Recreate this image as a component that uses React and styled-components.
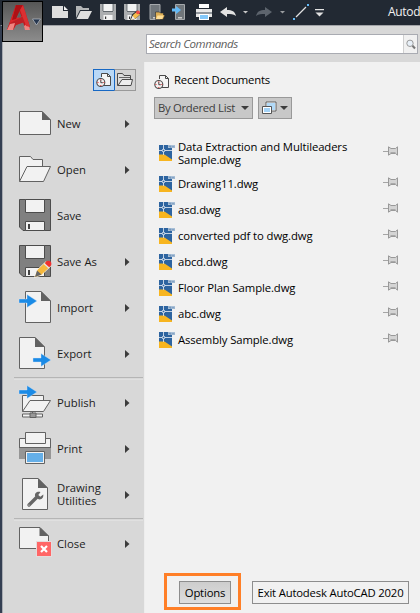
import React from "react";
import styled, { createGlobalStyle } from "styled-components";

const Global = createGlobalStyle`
  * { box-sizing: border-box; }
  body { margin: 0; overflow: hidden; background: #d8d8d8; }
  svg { display: block; flex: none; }
`;

const Window = styled.div`
  position: relative;
  width: 420px;
  height: 613px;
  overflow: hidden;
  display: flex;
  flex-direction: column;
  background: #d8d8d8;
  color: #111;
  font: 11.3px/13px "Open Sans", "Noto Sans", sans-serif;
`;

const TitleBar = styled.header`
  height: 25px;
  flex: none;
  display: flex;
  align-items: center;
  padding-left: 48px;
  background: #222933;
`;

const Slot = styled.div`
  width: ${(p) => p.$w || 24}px;
  height: 25px;
  flex: none;
  display: flex;
  justify-content: center;
  align-items: center;
`;

const Title = styled.span`
  margin-left: 64px;
  margin-top: -3px;
  color: #f2f2f2;
  font-size: 12px;
  letter-spacing: -0.3px;
  white-space: nowrap;
`;

const Body = styled.div`
  flex: 1;
  display: flex;
  flex-direction: column;
  border-top: 1px solid #a2a4a8;
  border-left: 2px solid #343f52;
`;

const Frame = styled.div`
  flex: 1;
  display: flex;
  flex-direction: column;
  border-left: 1px solid #a9acb2;
`;

const LogoButton = styled.button`
  position: absolute;
  left: 2px;
  top: 1px;
  width: 41px;
  height: 41px;
  padding: 0;
  border: 1px solid #000;
  background: linear-gradient(#565656, #8c8c8c);
`;

const SearchRow = styled.div`
  height: 36px;
  flex: none;
  padding: 8px 2px 0 143px;
`;

const SearchBox = styled.div`
  height: 20px;
  display: flex;
  align-items: center;
  border: 1px solid #a9abb2;
  background: #fff;
`;

const Placeholder = styled.span`
  flex: 1;
  padding-left: 2px;
  padding-bottom: 1px;
  color: #606060;
  font-style: italic;
  font-size: 11.5px;
  letter-spacing: -0.45px;
`;

const SearchButton = styled.div`
  width: 14px;
  height: 18px;
  display: flex;
  align-items: center;
  justify-content: center;
  border-left: 1px solid #d0d0d0;
  background: #f1f1f1;
`;

const Columns = styled.div`
  flex: 1;
  display: flex;
`;

const Sidebar = styled.nav`
  width: 141px;
  flex: none;
  display: flex;
  flex-direction: column;
  padding-top: 7px;
`;

const Tabs = styled.div`
  display: flex;
  height: 22px;
  margin: 0 0 10px 90px;
`;

const Tab = styled.div`
  width: ${(p) => (p.$active ? 21 : 22)}px;
  height: 22px;
  display: flex;
  align-items: center;
  justify-content: center;
  border: 1px solid ${(p) => (p.$active ? "#1768c4" : "#999")};
  border-right-width: ${(p) => (p.$active ? 0 : 1)}px;
  border-left-color: #1768c4;
  background: ${(p) => (p.$active ? "#b9d8f6" : "#d3d3d3")};
`;

const MenuRow = styled.div`
  height: 46px;
  flex: none;
  display: flex;
  align-items: center;
  padding-left: 15px;
`;

const MenuLabel = styled.span`
  width: 68px;
  margin-left: 5px;
  padding-bottom: 2px;
  color: #1c1c1c;
`;

const Divider = styled.div`
  height: 3px;
  flex: none;
  margin: 0 1px 0 11px;
  border-bottom: 1px solid #e0e0e0;
  border-top: 1px solid #b5b5b5;
`;

const Panel = styled.main`
  flex: 1;
  display: flex;
  flex-direction: column;
  padding: 12px 0 0 9px;
  border-left: 1px solid #ededed;
  background: #f1f1f1;
`;

const PanelTitle = styled.div`
  height: 16px;
  display: flex;
  align-items: center;
  gap: 4px;
  color: #000;
`;

const TitleText = styled.span`
  margin-top: -6px;
  letter-spacing: -0.22px;
`;

const Filters = styled.div`
  display: flex;
  gap: 5px;
  margin-top: 7px;
`;

const Filter = styled.div`
  width: ${(p) => p.$w}px;
  height: 22px;
  display: flex;
  align-items: center;
  justify-content: space-between;
  padding: 0 3px;
  border: 1px solid #999;
  background: #c8c8c8;
  color: #3c3c3c;
  white-space: nowrap;
`;

const FilterText = styled.span`
  padding-bottom: 2px;
  letter-spacing: -0.3px;
`;

const FileList = styled.div`
  margin-top: 16px;
  flex: 1;
`;

const FileRow = styled.div`
  height: ${(p) => (p.$tall ? 36 : 26)}px;
  display: flex;
  align-items: center;
  padding-left: 5px;
`;

const FileName = styled.span`
  width: 205px;
  margin-left: 3px;
  padding: 0 20px 1px 0;
  color: #000;
  letter-spacing: -0.1px;
`;

const PinWrap = styled.div`
  padding-bottom: 4px;
`;

const Footer = styled.footer`
  height: 40px;
  flex: none;
  display: flex;
  padding-left: 10px;
`;

const Highlight = styled.div`
  width: 77px;
  height: 37px;
  padding: 5px 0 0 12px;
  border: 3px solid #ff7f27;
`;

const Button = styled.button`
  width: ${(p) => p.$w}px;
  height: 23px;
  flex: none;
  margin: ${(p) => p.$m || 0};
  padding: 0;
  border: 1px solid #8d8d8d;
  background: ${(p) => (p.$pressed ? "linear-gradient(#cdcdcd, #dedede)" : "#f1f1f1")};
  color: #000;
  font: inherit;
  white-space: nowrap;
  letter-spacing: -0.18px;
`;

const Svg = ({ w, h, children }) => (
  <svg width={w} height={h} viewBox={`0 0 ${w} ${h}`}>{children}</svg>
);

const Caret = ({ color = "#3c3c3c", w = 8 }) => (
  <svg width={w} height={w / 2} viewBox="0 0 8 4"><path d="M0 0h8L4 4z" fill={color} /></svg>
);

const Logo = () => (
  <Svg w={39} h={39}>
    <path d="M4 28 13 3h7l7 22-5 1-6-18-7 18z" fill="#c3161b" />
    <path d="M4 28 13 3h4l-4 13 9-3 2 6-11 4-3 5z" fill="#d9272b" />
    <path d="M13 3h7l-3 5-4 9-4 1z" fill="#ad1015" />
    <path d="M14.500 15.500l2-5 2 5z" fill="#626262" />
    <path d="M4 28l3-7 14-7 3 5-11 4-3 5z" fill="#bd2025" />
    <path d="M4 28l3-6 5-1-2 7zM21 24l4-3 2 7h-5z" fill="#ef8480" />
    <path d="M20 3l7 22-4-1-6-16z" fill="#db3032" />
    <path d="M29.500 17h8l-4 6z" fill="#26364e" stroke="#b8bec8" strokeWidth=".7" />
  </Svg>
);

const fill = "#f2f2f2";
const line = "#626262";

const BlueArrow = ({ x, y }) => (
  <path transform={`translate(${x} ${y})`} d="M0-2h8v-4.500L18 0 8 6.500V2H0z" fill="#1b8be6" stroke="#d8e6f2" strokeWidth=".4" />
);

const Floppy = () => (
  <>
    <path d="M1.500 1.500h31v31H5l-3.500-3.500z" fill="#808080" stroke="#4c4c4c" />
    <path d="M7.500 1.500h19v13h-19zM7.500 23.500h19v9h-19z" fill={fill} stroke="#4c4c4c" />
    <path d="M10 26h2v5h-2z" fill="#444" />
  </>
);

const menuIcons = {
  new: (
    <>
      <path d="M1.500 5.500H24l8.500 8.500v14.500h-31z" fill={fill} stroke={line} />
      <path d="M24 5v9h9z" fill={line} />
    </>
  ),
  open: (
    <>
      <path d="M1.500 29.500v-25h11l2.500 3h9.500v10" fill={fill} stroke={line} />
      <path d="M9 14.500h23.500l-7 15h-24z" fill={fill} stroke={line} />
    </>
  ),
  save: <Floppy />,
  saveAs: (
    <>
      <Floppy />
      <path d="M16.500 33.500l2.500-7.500 9-8.500 5 4.500-9.500 9z" fill="#f5b83d" stroke="#fff" strokeWidth=".6" />
      <path d="M17 33l2-6.500 4.500 4z" fill="#666" />
      <circle cx="30.300" cy="19.800" r="3.100" fill="#ef3030" />
      <path d="M26 19.500l5 4.500" stroke="#e6e6e6" strokeWidth="1.400" />
    </>
  ),
  import: (
    <>
      <path d="M7.500 1.500H23l9.500 9.500v21.500h-25z" fill={fill} stroke={line} />
      <path d="M23 1v10h10z" fill={line} />
      <BlueArrow x={1} y={11} />
    </>
  ),
  export: (
    <>
      <path d="M1.500 1.500H17l9.500 9.500v21.500h-25z" fill={fill} stroke={line} />
      <path d="M17 1v10h10z" fill={line} />
      <BlueArrow x={15} y={24} />
    </>
  ),
  publish: (
    <>
      <path d="M4.500 26.500v-16h21v6" fill={fill} stroke={line} />
      <path d="M12 15.500h20.500l-7 11h-21z" fill={fill} stroke={line} />
      <path d="M14.500 26v3" stroke={line} />
      <path d="M4.500 29h20v3h-20z" fill={fill} stroke={line} />
      <path d="M12 28h6v4.500h-6z" fill="#999" stroke={line} />
      <BlueArrow x={1} y={7} />
    </>
  ),
  print: (
    <>
      <path d="M1.500 7.500h31v20h-31z" fill={fill} stroke={line} />
      <path d="M1 16.500h32V28H1z" fill="#969696" />
      <path d="M7.500 1.500h20v11h-20z" fill={fill} stroke={line} />
      <path d="M1 16.500h32" stroke={line} />
      <path d="M7.500 20.500h19v12h-19z" fill={fill} stroke={line} />
      <path d="M9 22h16v9H9z" fill="#65afe8" />
    </>
  ),
  tools: (
    <>
      <path d="M4.500 1.500H20l9.500 9.500v21.500h-25z" fill={fill} stroke={line} />
      <path d="M20 1v10h10z" fill={line} />
      <path d="M11 28l7.500-7.500" stroke="#666" strokeWidth="3.400" strokeLinecap="round" />
      <path d="M22.500 15l-2.200 3 2 1.700 3-2.200c.5 4-2.600 5.700-5.300 4.500l-2.800-2.600c-1-3 1.500-5.600 5.300-4.400z" fill="#666" />
      <circle cx="11" cy="28" r=".6" fill="#eee" />
    </>
  ),
  close: (
    <>
      <path d="M1.500 1.500H22l8.500 8.500v12.500h-29z" fill={fill} stroke={line} />
      <path d="M21.500 1v9H31z" fill={line} />
      <path d="M18 15h16v16H18z" fill="#e5dcdc" />
      <path d="M19 16h14v14H19z" fill="#ff6666" />
      <path d="M23 20l6 6m0-6l-6 6" stroke="#fff" strokeWidth="2.200" />
    </>
  ),
};

const RecentIcon = () => (
  <Svg w={16} h={16}>
    <path d="M5.500 5V1.500h6l3 3v9H8" fill="#f5f5f5" stroke="#4a4a4a" />
    <path d="M11.500 1.500v3h3" fill="none" stroke="#4a4a4a" />
    <circle cx="4.800" cy="10.500" r="4" fill="#f4f0f0" stroke="#4a4a4a" strokeWidth="1.100" />
    <path d="M4.800 8v2.700h2" fill="none" stroke="#444" />
    <path d="M4.300 7.200h1v1h-1zM4.300 13h1v1h-1zM1.500 10h1v1h-1zM7.300 10h1v1h-1z" fill="#e33" />
  </Svg>
);

const SmallFolder = () => (
  <Svg w={16} h={16}>
    <path d="M.5 13.500v-12h5l1.500 2h6.500v10z" fill="#ddd" stroke="#4a4a4a" />
    <path d="M2 5.500h11" stroke="#666" />
    <path d="M5 7.500h10.500L14 13.500H1z" fill="#eee" stroke="#4a4a4a" />
  </Svg>
);

const Phone = () => (
  <>
    <path d="M2 .5h10v15H2z" fill="#70767b" stroke="#a5a9ac" />
    <path d="M5 13h4v1.500H5z" fill="#ccc" />
  </>
);

const SmallFloppy = () => (
  <>
    <path d="M0 0h16v16H1.500L0 14.500z" fill="#acaeb0" />
    <path d="M3 0h10v7H3zM3.500 11h9v5h-9z" fill="#f3f3f3" />
    <path d="M3 7.500h10M3 0v7M13 0v7" stroke="#444a52" strokeWidth=".7" />
    <path d="M5 12.500h1.200V15H5z" fill="#333" />
  </>
);

const toolbar = [
  { id: "new", art: <><path d="M0 2h11v5h5v7H0z" fill="#dedede" /><path d="M12 2l4 4h-4z" fill="#f2f2f2" /></> },
  { id: "open", art: <><path d="M0 2h5l2 2h6v2H4L0 14z" fill="#b4b6b7" /><path d="M4.500 7H16l-4 8H.5z" fill="#dedede" /></> },
  { id: "save", art: <SmallFloppy /> },
  { id: "saveAs", art: <><SmallFloppy /><path d="M6 16.500l2-6 5-4 4 3.500-6 5z" fill="#222933" /><path d="M7 16l2-5 4-3.500 3 3-4.500 4z" fill="#f4bd4c" /><path d="M7 16l1.500-4 2.500 2.500z" fill="#eee" /><circle cx="14" cy="8.300" r="1.900" fill="#f04b46" /></> },
  { id: "openMobile", art: <><Phone /><path d="M7.500 15.500V8h4l1 1h3v2H17l-2 4.500z" fill="#dcae55" stroke="#222933" strokeWidth=".6" /><path d="M9.500 11.500h6.200L14 15H8z" fill="#ffdf98" /></> },
  { id: "saveMobile", art: <><path d="M3.500.5h9v15h-9z" fill="#70767b" stroke="#a5a9ac" /><path d="M6 13h4v1.500H6z" fill="#ccc" /><path d="M0 4.500h4V2l5 4-5 4V7.500H0z" fill="#63baf8" /></> },
  { id: "print", art: <><path d="M3 0h10v4H3z" fill="#fff" /><path d="M0 5h16v8H0z" fill="#e8e8e8" /><path d="M0 8h16v2H0z" fill="#91969c" /><path d="M3 10h10v6H3z" fill="#fff" /><path d="M4 11h8v4H4z" fill="#83c8fa" /></> },
];

const menu = [
  { label: "New", icon: "new", arrow: true },
  { label: "Open", icon: "open", arrow: true },
  { label: "Save", icon: "save" },
  { label: "Save As", icon: "saveAs", arrow: true },
  { label: "Import", icon: "import", arrow: true },
  { label: "Export", icon: "export", arrow: true, divider: true },
  { label: "Publish", icon: "publish", arrow: true },
  { label: "Print", icon: "print", arrow: true },
  { label: "Drawing Utilities", icon: "tools", arrow: true, divider: true },
  { label: "Close", icon: "close", arrow: true },
];

const files = [
  "Data Extraction and Multileaders Sample.dwg",
  "Drawing11.dwg",
  "asd.dwg",
  "converted pdf to dwg.dwg",
  "abcd.dwg",
  "Floor Plan Sample.dwg",
  "abc.dwg",
  "Assembly Sample.dwg",
];

const DwgIcon = () => (
  <Svg w={16} h={18}>
    <path d="M0 1h13v16H0z" fill="#2d64a0" />
    <path d="M0 10.500h5.500l7.500 5V17H0z" fill="#f7b520" />
    <path d="M4.500 1v10M0 6.500h13" stroke="#e9eef4" strokeWidth=".8" />
    <circle cx="4.500" cy="6.500" r="1.300" fill="#2d64a0" stroke="#fff" strokeWidth=".8" />
    <path d="M9 1h7v3H9z" fill="#b9cde0" />
    <path d="M10 3.500V1.500l1.500 2v-2M13 1.500v2l1-1 1 1v-2" fill="none" stroke="#527ba8" strokeWidth=".6" />
  </Svg>
);

const Pin = () => (
  <Svg w={16} h={10}>
    <path d="M0 5.500h5" stroke="#a5a5a5" />
    <path d="M5.500.8v8.400L8 7.500h4.500l2 1.700V.8l-2 1.700H8z" fill="#d4d4d4" stroke="#999" />
    <path d="M7.500 6.500h5" stroke="#aaa" />
  </Svg>
);

export default function App() {
  return (
    <>
      <Global />
      <Window>
        <TitleBar>
          {toolbar.map((t) => (
            <Slot key={t.id}><svg width="17" height="17" viewBox="0 0 17 17">{t.art}</svg></Slot>
          ))}
          <Slot>
            <Svg w={16} h={11}><path d="M0 5l7-5v3c5 0 8 1.500 9 6-3-2-5-2-9-2v3z" fill="#e2e2e2" /></Svg>
          </Slot>
          <Slot $w={11}><Caret color="#c8c8c8" w={5} /></Slot>
          <Slot $w={26}>
            <Svg w={16} h={11}><path d="M16 5L9 0v3C4 3 1 4.500 0 9c3-2 5-2 9-2v3z" fill="#5d646d" /></Svg>
          </Slot>
          <Slot $w={10}><Caret color="#9a9da0" w={5} /></Slot>
          <Slot $w={28}>
            <Svg w={17} h={17}>
              <path d="M3 13L13 3" stroke="#e2e2e2" strokeWidth="1.200" />
              <path d="M0 14h2v2H0zM14 0h2v2h-2z" fill="#63baf8" />
            </Svg>
          </Slot>
          <Slot $w={9}>
            <Svg w={9} h={8}><path d="M0 0h9v1.300H0zM.5 3.500h8l-4 4z" fill="#e2e2e2" /></Svg>
          </Slot>
          <Title>Autod</Title>
        </TitleBar>
        <Body>
          <Frame>
            <SearchRow>
              <SearchBox>
                <Placeholder>Search Commands</Placeholder>
                <SearchButton>
                  <Svg w={10} h={11}>
                    <circle cx="4" cy="4.300" r="3.200" fill="#e8f0f8" stroke="#9a9a9a" />
                    <path d="M6.500 6.800L9 9.500" stroke="#777" strokeWidth="2" />
                  </Svg>
                </SearchButton>
              </SearchBox>
            </SearchRow>
            <Columns>
              <Sidebar>
                <Tabs>
                  <Tab $active><RecentIcon /></Tab>
                  <Tab><SmallFolder /></Tab>
                </Tabs>
                {menu.map((m) => (
                  <React.Fragment key={m.label}>
                    <MenuRow>
                      <Svg w={34} h={36}>{menuIcons[m.icon]}</Svg>
                      <MenuLabel>{m.label}</MenuLabel>
                      {m.arrow && <Svg w={5} h={8}><path d="M0 0l4.500 4L0 8z" fill="#3c3c3c" /></Svg>}
                    </MenuRow>
                    {m.divider && <Divider />}
                  </React.Fragment>
                ))}
              </Sidebar>
              <Panel>
                <PanelTitle><RecentIcon /><TitleText>Recent Documents</TitleText></PanelTitle>
                <Filters>
                  <Filter $w={99}><FilterText>By Ordered List</FilterText><Caret /></Filter>
                  <Filter $w={34}>
                    <Svg w={15} h={14}>
                      <path d="M4.500 1.500h9v8h-9z" fill="#b2daf8" stroke="#fff" />
                      <path d="M4 1h10v9H4z" fill="none" stroke="#555" strokeWidth=".9" />
                      <path d="M.5 5.500h9v7h-9z" fill="#fff" stroke="#555" />
                      <path d="M2 7h6v4H2z" fill="#a4d3f7" />
                    </Svg>
                    <Caret />
                  </Filter>
                </Filters>
                <FileList>
                  {files.map((f, i) => (
                    <FileRow key={f} $tall={i === 0}>
                      <DwgIcon />
                      <FileName>{f}</FileName>
                      <PinWrap><Pin /></PinWrap>
                    </FileRow>
                  ))}
                </FileList>
                <Footer>
                  <Highlight><Button $w={52} $pressed>Options</Button></Highlight>
                  <Button $w={157} $m="8px 0 0 11px">Exit Autodesk AutoCAD 2020</Button>
                </Footer>
              </Panel>
            </Columns>
          </Frame>
        </Body>
        <LogoButton aria-label="Application menu"><Logo /></LogoButton>
      </Window>
    </>
  );
}
